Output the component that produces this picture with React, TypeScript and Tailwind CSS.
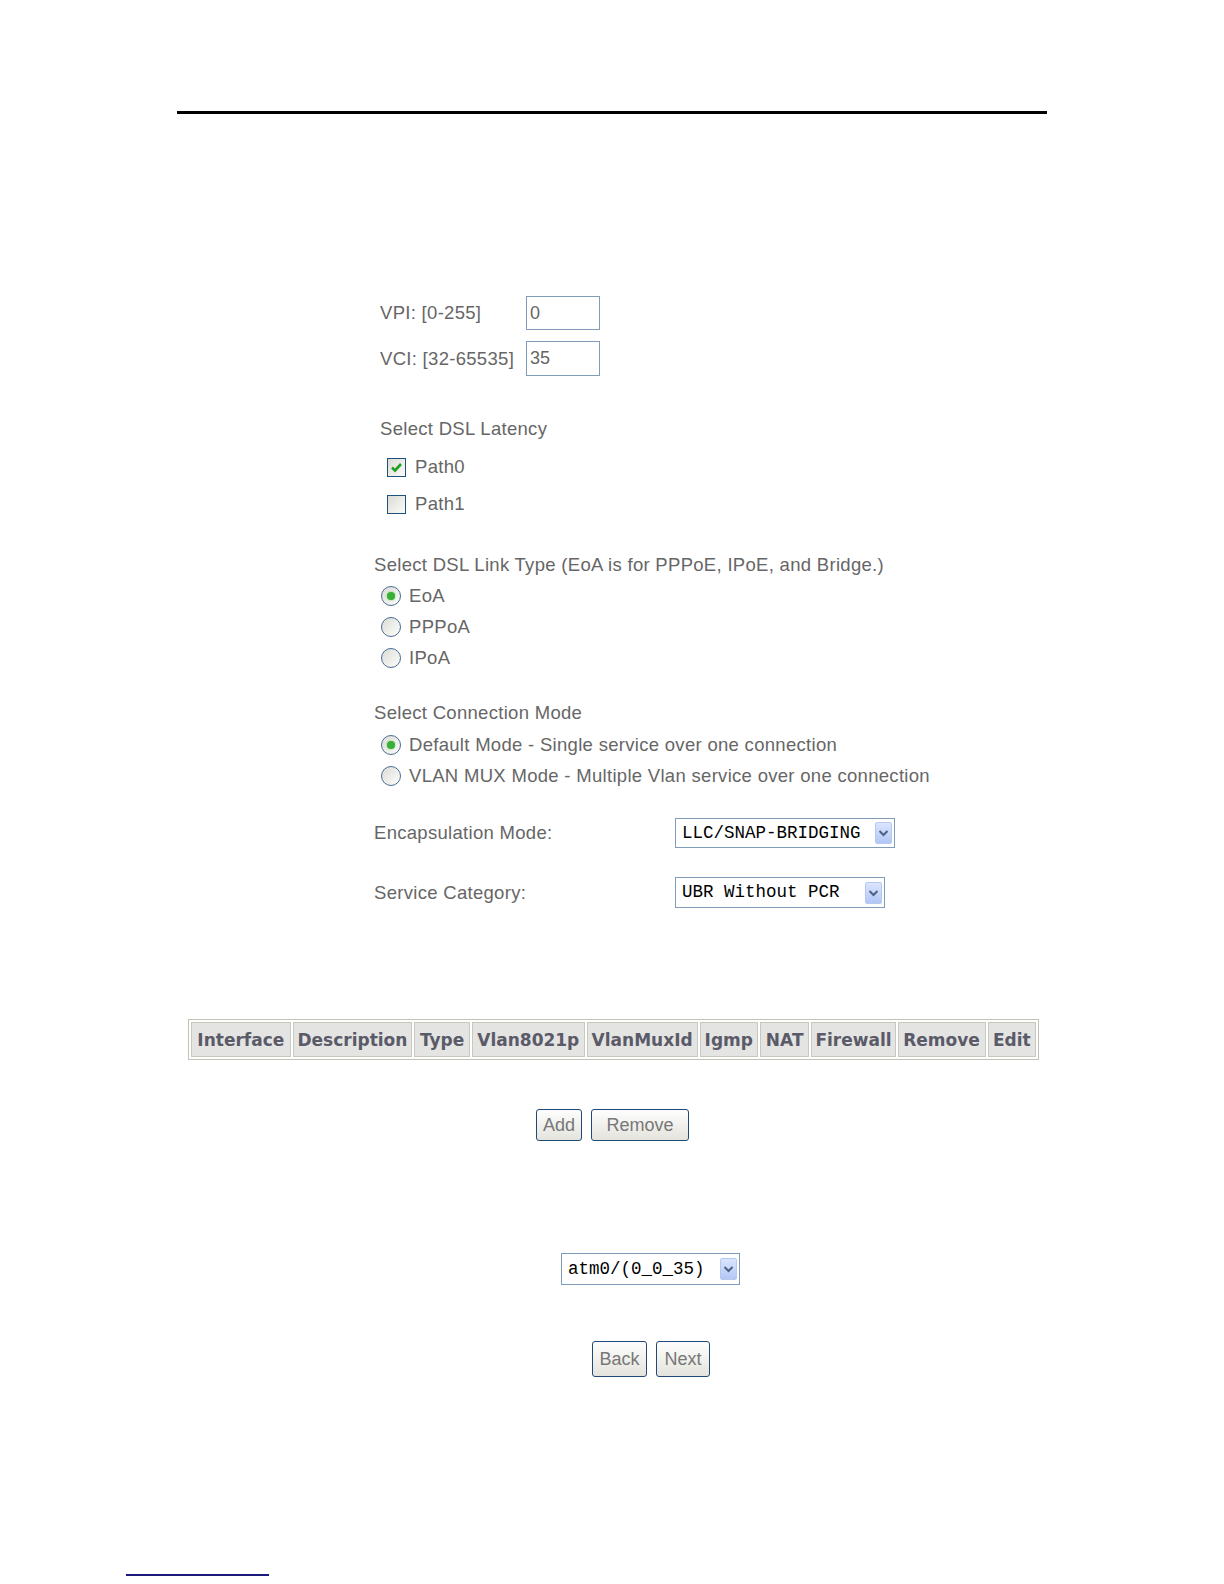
import React from 'react';

const label = "text-[#666] text-[18.5px] tracking-[0.3px] leading-[24px] whitespace-nowrap";

function Check({ checked }: { checked?: boolean }) {
  return (
    <span className="flex items-center justify-center w-[19px] h-[19px] border border-[#1c5180] bg-linear-to-br from-[#dcdcd6] to-[#fbfbf9]">
      {checked && (
        <svg width="13" height="13" viewBox="0 0 13 13">
          <path d="M2 6.5 L5 9.5 L11 3" fill="none" stroke="#21a121" strokeWidth="2.6" />
        </svg>
      )}
    </span>
  );
}

function Radio({ checked }: { checked?: boolean }) {
  return (
    <span className="flex items-center justify-center w-[20px] h-[20px] rounded-full border-[1.5px] border-[#4a6c92] bg-linear-to-br from-[#dcdcd6] to-[#fdfdfc]">
      {checked && <span className="w-[8px] h-[8px] rounded-full bg-[#38b038] shadow-[0_0_2px_#6c6]" />}
    </span>
  );
}

function Select({ value, width }: { value: string; width: string }) {
  return (
    <div className={`flex items-center h-full border border-[#7f9db9] bg-white pl-[6px] pr-[2px] ${width}`}>
      <span className="flex-1 text-[17.5px] text-black whitespace-pre" style={{ fontFamily: '"Liberation Mono", monospace' }}>
        {value}
      </span>
      <span className="flex items-center justify-center w-[17px] h-[22px] rounded-[2px] border border-[#b6c8f2] bg-linear-to-b from-[#dbe6fe] to-[#b3c7f5]">
        <svg width="11" height="8" viewBox="0 0 11 8">
          <path d="M1.5 2 L5.5 6 L9.5 2" fill="none" stroke="#4d6185" strokeWidth="2" />
        </svg>
      </span>
    </div>
  );
}

function Button({ children, width, height }: { children: React.ReactNode; width: string; height: string }) {
  return (
    <button className={`flex items-center justify-center rounded-[3px] border border-[#1f4a78] bg-linear-to-b from-[#fefefe] to-[#e4e3dc] text-[#777] text-[18px] ${width} ${height}`}>
      {children}
    </button>
  );
}

const cols: [string, string][] = [
  ['Interface', 'w-[104px]'],
  ['Description', 'w-[121px]'],
  ['Type', 'w-[59px]'],
  ['Vlan8021p', 'w-[115px]'],
  ['VlanMuxId', 'w-[113px]'],
  ['Igmp', 'w-[60px]'],
  ['NAT', 'w-[53px]'],
  ['Firewall', 'w-[84px]'],
  ['Remove', 'w-[91px]'],
  ['Edit', 'w-[51px]'],
];

export default function App() {
  return (
    <div className="w-[1224px] h-[1584px] bg-white pt-[111px] flex flex-col" style={{ fontFamily: '"Liberation Sans", Arial, sans-serif' }}>
      <div className="ml-[177px] w-[870px] h-[3px] bg-black" />

      <div className="ml-[374px] flex flex-col">
        {/* VPI / VCI */}
        <div className="mt-[182px] ml-[6px] flex items-center h-[34px]">
          <span className={`${label} w-[146px]`}>VPI: [0-255]</span>
          <span className="w-[74px] h-[34px] border border-[#7f9db9] flex items-center pl-[3px] text-[18px] text-[#666]">0</span>
        </div>
        <div className="mt-[11px] ml-[6px] flex items-center h-[35px]">
          <span className={`${label} w-[146px]`}>VCI: [32-65535]</span>
          <span className="w-[74px] h-[35px] border border-[#7f9db9] flex items-center pl-[3px] text-[18px] text-[#666]">35</span>
        </div>

        {/* Latency */}
        <div className={`${label} mt-[41px] ml-[6px]`}>Select DSL Latency</div>
        <div className="mt-[14px] ml-[13px] flex items-center gap-[9px] h-[24px]">
          <Check checked />
          <span className={label}>Path0</span>
        </div>
        <div className="mt-[13px] ml-[13px] flex items-center gap-[9px] h-[24px]">
          <Check />
          <span className={label}>Path1</span>
        </div>

        {/* Link type */}
        <div className={`${label} mt-[37px]`}>Select DSL Link Type (EoA is for PPPoE, IPoE, and Bridge.)</div>
        {['EoA', 'PPPoA', 'IPoA'].map((t, i) => (
          <div key={t} className="mt-[7px] ml-[7px] flex items-center gap-[8px] h-[24px]">
            <Radio checked={i === 0} />
            <span className={label}>{t}</span>
          </div>
        ))}

        {/* Connection mode */}
        <div className={`${label} mt-[31px]`}>Select Connection Mode</div>
        <div className="mt-[8px] ml-[7px] flex items-center gap-[8px] h-[24px]">
          <Radio checked />
          <span className={label}>Default Mode - Single service over one connection</span>
        </div>
        <div className="mt-[7px] ml-[7px] flex items-center gap-[8px] h-[24px]">
          <Radio />
          <span className={label}>VLAN MUX Mode - Multiple Vlan service over one connection</span>
        </div>

        {/* Encapsulation */}
        <div className="mt-[30px] flex items-center h-[30px]">
          <span className={`${label} w-[301px]`}>Encapsulation Mode:</span>
          <Select value="LLC/SNAP-BRIDGING" width="w-[220px]" />
        </div>
        <div className="mt-[29px] flex items-center h-[31px]">
          <span className={`${label} w-[301px]`}>Service Category:</span>
          <Select value="UBR Without PCR" width="w-[210px]" />
        </div>
      </div>

      {/* Table */}
      <div className="mt-[111px] ml-[188px] w-[851px]">
        <table className="border-separate border-spacing-[2px] border border-[#c2c2b4] bg-white h-[41px]">
          <thead>
            <tr>
              {cols.map(([c, w]) => (
                <th
                  key={c}
                  className={`${w} border border-[#c8c8be] bg-[#e4e4e2] text-[#5a5a68] text-[17px] font-bold leading-[20px] px-[3px] text-center whitespace-nowrap`}
                  style={{ fontFamily: '"DejaVu Sans", Verdana, sans-serif' }}
                >
                  {c}
                </th>
              ))}
            </tr>
          </thead>
        </table>
      </div>

      {/* Add / Remove */}
      <div className="mt-[49px] ml-[536px] flex gap-[9px]">
        <Button width="w-[46px]" height="h-[32px]">Add</Button>
        <Button width="w-[98px]" height="h-[32px]">Remove</Button>
      </div>

      {/* Interface select */}
      <div className="mt-[112px] ml-[561px] h-[32px] flex">
        <Select value="atm0/(0_0_35)" width="w-[179px]" />
      </div>

      {/* Back / Next */}
      <div className="mt-[56px] ml-[592px] flex gap-[9px]">
        <Button width="w-[55px]" height="h-[36px]">Back</Button>
        <Button width="w-[54px]" height="h-[36px]">Next</Button>
      </div>

      <div className="mt-auto mb-[8px] ml-[126px] w-[143px] h-[2px] bg-[#1a1a7a]" />
    </div>
  );
}
